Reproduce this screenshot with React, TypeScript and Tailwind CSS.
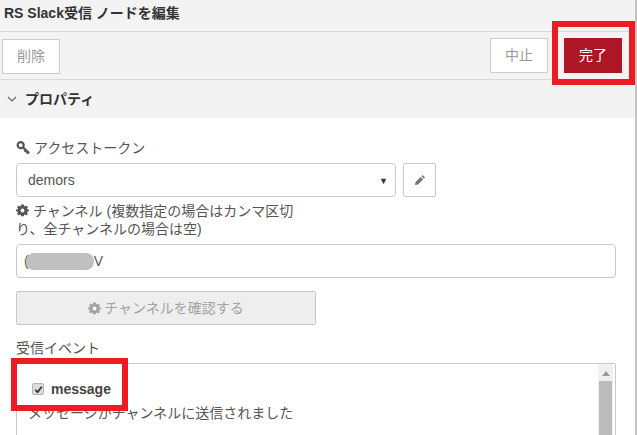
const font = { fontFamily: '"Liberation Sans", "Noto Sans CJK JP", sans-serif' }

function Cog({ className }: { className: string }) {
  return (
    <svg viewBox="0 0 24 24" className={className} fill="currentColor">
      <path d="M9 0h6l.6 3.400 1.700.7L20.200 2l3.800 4-2.100 2.900.7 1.700L26 11v4l-3.400.6-.7 1.700 2.100 2.900-3.800 3.800-2.900-2.100-1.700.7L15 26H9l-.6-3.400-1.700-.7L3.800 24 0 20.200l2.100-2.900-.7-1.700L-2 15v-4l3.400-.6.7-1.700L0 6l3.800-4 2.900 2.100 1.700-.7z" transform="translate(1.900 1) scale(.84)" />
      <circle cx="12" cy="12" r="3.500" fill="white" />
    </svg>
  )
}

function ToolButton({ label, primary }: { label: string; primary?: boolean }) {
  return (
    <div
      className={`w-[58px] h-[35px] flex items-center justify-center text-sm pb-[2px] ${
        primary ? "bg-[#ad1625] text-white" : "bg-white border border-[#cccccc] text-[#9a9a9a]"
      }`}
    >
      {label}
    </div>
  )
}

export default function App() {
  return (
    <div className="relative w-[637px] h-[435px] overflow-hidden bg-white border-r-2 border-[#c4c4c4] text-[#555]" style={font}>
      <div className="h-[32px] bg-[#f3f3f3] border-b border-[#d9d9d9] pl-[4px] pt-[3px] text-sm leading-[20px] font-bold text-[#333]">
        RS Slack受信 ノードを編集
      </div>

      <div className="h-[48px] bg-[#f3f3f3] border-b border-[#d9d9d9] pl-[2px] pr-[13px] pt-[6px] flex">
        <div className="mt-[1px]">
          <ToolButton label="削除" />
        </div>
        <div className="ml-auto flex gap-[16px]">
          <ToolButton label="中止" />
          <ToolButton label="完了" primary />
        </div>
      </div>

      <div className="h-[38px] bg-[#f3f3f3] flex items-center pl-[7px] gap-[8px] text-sm font-bold text-[#333]">
        <svg viewBox="0 0 10 6" className="w-[10px] h-[6px]" fill="none" stroke="#666" strokeWidth="1.200">
          <path d="M1 1l4 4 4-4" />
        </svg>
        プロパティ
      </div>

      <div className="pl-[16px] pr-[21px] pt-[17px] text-sm">
        <div className="h-[25px] mb-[3px] flex items-center gap-[3px] leading-[20px]">
          <svg viewBox="0 0 16 16" className="w-[15px] h-[15px] text-[#555]" fill="none" stroke="currentColor" strokeWidth="2.400">
            <circle cx="5" cy="5.500" r="3.200" />
            <path d="M7.500 8l6.500 6M10.500 10.500l-1.500 2M13 12.500l-1.500 2" />
          </svg>
          アクセストークン
        </div>

        <div className="flex gap-[7px]">
          <div className="relative w-[380px] h-[34px] border border-[#c9c9c9] rounded-[4px] flex items-center pl-[11px]">
            demors
            <span className="absolute right-[7px] top-[11px] text-[9px] leading-[12px] text-[#333]">▼</span>
          </div>
          <div className="w-[33px] h-[34px] border border-[#c9c9c9] rounded-[2px] flex items-center justify-center text-[#777]">
            <svg viewBox="0 0 12 12" className="w-[12px] h-[12px]" fill="currentColor">
              <path d="M8.500 1l2.500 2.500-1.200 1.200-2.500-2.500zM6.600 2.900l2.500 2.500-5 5L1 11l.6-3.100z" />
            </svg>
          </div>
        </div>

        <div className="w-[290px] mt-[5px] leading-[18px]">
          <Cog className="inline-block w-[13px] h-[13px] mr-[4px] align-[-1px] text-[#555]" />
          チャンネル (複数指定の場合はカンマ区切り、全チャンネルの場合は空)
        </div>

        <div className="relative w-[600px] h-[34px] mt-[6px] border border-[#c9c9c9] rounded-[4px] flex items-center pl-[7px] leading-[20px]">
          (<span className="w-[68px] h-[17px] rounded-[8px] bg-[#c0c0c0] ml-[-3px]"></span>V
        </div>

        <div className="w-[300px] h-[34px] mt-[13px] bg-[#eeeeee] border border-[#c9c9c9] rounded-[2px] flex items-center justify-center gap-[3px] text-[#a2a2a2]">
          <Cog className="w-[13px] h-[13px] text-[#a2a2a2]" />
          チャンネルを確認する
        </div>

        <div className="mt-[13px] h-[20px] leading-[20px]">受信イベント</div>

        <div className="relative w-[600px] h-[120px] mt-[5px] border border-[#c9c9c9] rounded-[2px] pl-[15px] pt-[18px] overflow-hidden">
          <div className="flex items-center gap-[7px] h-[14px] font-bold text-[#444]">
            <span className="w-[12px] h-[12px] bg-[#dcdcdc] border border-[#b5b5b5] rounded-[2px] flex items-center justify-center">
              <svg viewBox="0 0 10 10" className="w-[9px] h-[9px]" fill="none" stroke="#333" strokeWidth="2">
                <path d="M1.500 5.500l2.500 2.500 4.500-6" />
              </svg>
            </span>
            message
          </div>
          <div className="mt-[7px] ml-[-4px] h-[20px] leading-[20px]">メッセージがチャンネルに送信されました</div>

          <div className="absolute right-[2px] top-0 bottom-0 w-[15px] bg-[#f0f0f0] flex flex-col items-center">
            <svg viewBox="0 0 8 5" className="w-[8px] h-[5px] mt-[7px] mb-[5px]" fill="#999">
              <path d="M4 0l4 5H0z" />
            </svg>
            <div className="w-[13px] flex-1 bg-[#bcbcbc]"></div>
          </div>
        </div>
      </div>

      <div className="absolute left-[552px] top-[21px] w-[83px] h-[64px] border-[6px] border-[#ed1c24]"></div>
      <div className="absolute left-[11px] top-[358px] w-[117px] h-[53px] border-[6px] border-[#ed1c24]"></div>
    </div>
  )
}
